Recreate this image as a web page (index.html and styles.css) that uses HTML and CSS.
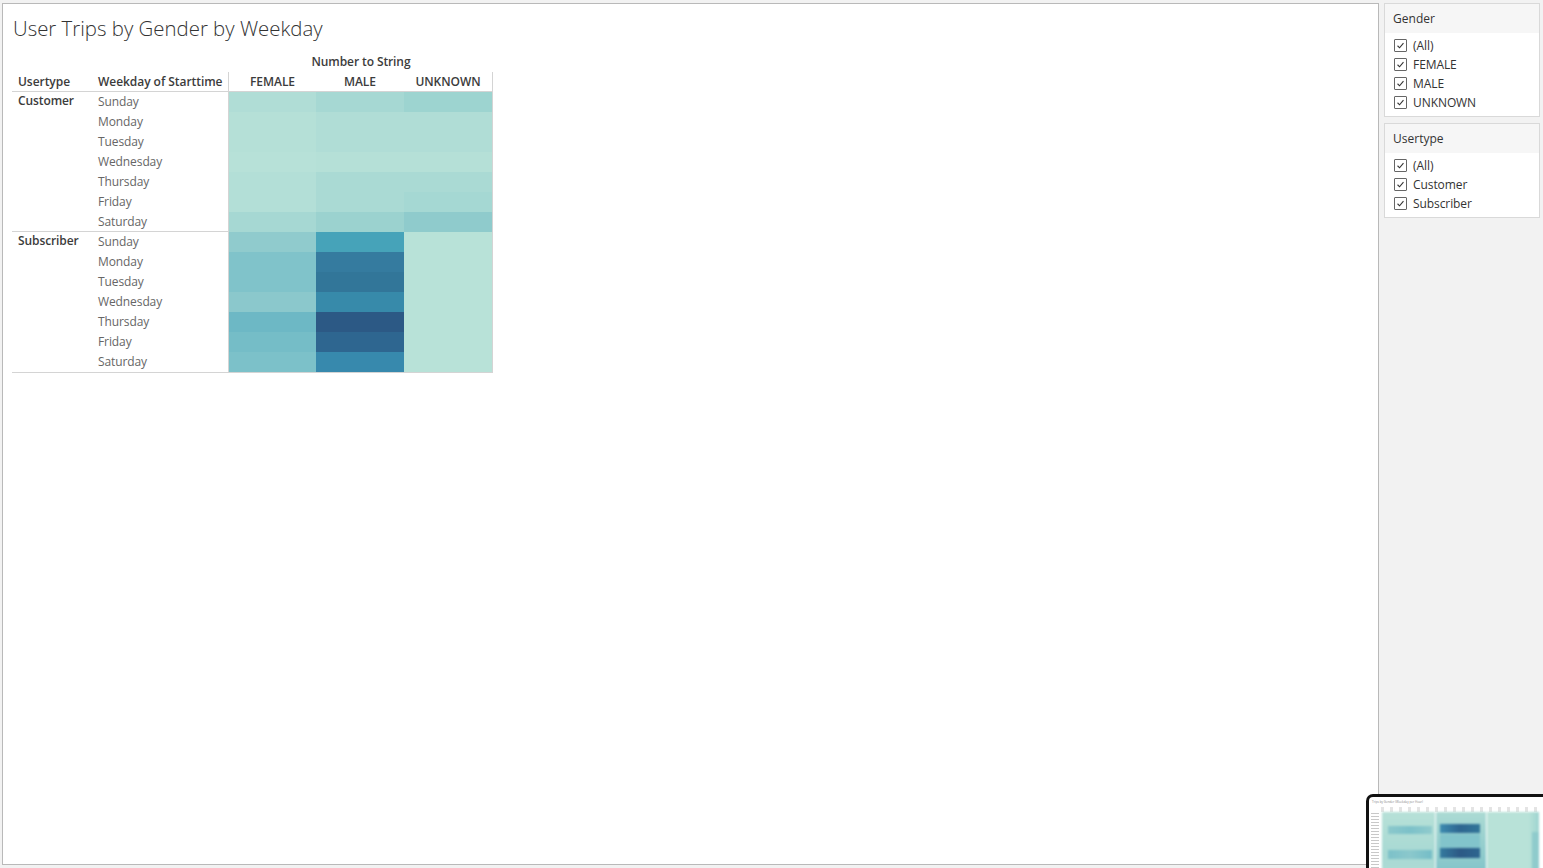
FILE: index.html
```html
<!DOCTYPE html>
<html lang="en">
<head>
<meta charset="utf-8">
<title>User Trips by Gender by Weekday</title>
<link rel="stylesheet" href="styles.css">
</head>
<body>
<div class="page">
  <main class="main">
    <h1 class="title">User Trips by Gender by Weekday</h1>
    <div class="crosstab">
      <div class="col-title">Number to String</div>
      <div class="head-row">
        <div class="h-user">Usertype</div>
        <div class="h-week">Weekday of Starttime</div>
        <div class="h-val h-first">FEMALE</div>
        <div class="h-val">MALE</div>
        <div class="h-val h-last">UNKNOWN</div>
      </div>
      <div class="body">
        <div class="group">
          <div class="labels">
            <div class="lab-user">Customer</div>
            <div class="lab-days">
              <div class="day">Sunday</div>
              <div class="day">Monday</div>
              <div class="day">Tuesday</div>
              <div class="day">Wednesday</div>
              <div class="day">Thursday</div>
              <div class="day">Friday</div>
              <div class="day">Saturday</div>
            </div>
          </div>
          <div class="cells">
            <div class="c" style="background:#b0ddd6"></div><div class="c" style="background:#a6d8d3"></div><div class="c" style="background:#9dd4d0"></div>
            <div class="c" style="background:#b5e0d7"></div><div class="c" style="background:#b0ddd6"></div><div class="c" style="background:#b0ddd6"></div>
            <div class="c" style="background:#b5e0d7"></div><div class="c" style="background:#b0ddd6"></div><div class="c" style="background:#b0ddd6"></div>
            <div class="c" style="background:#b7e1d8"></div><div class="c" style="background:#b5e0d7"></div><div class="c" style="background:#b5e0d7"></div>
            <div class="c" style="background:#b3dfd7"></div><div class="c" style="background:#aadad4"></div><div class="c" style="background:#aadad4"></div>
            <div class="c" style="background:#b3dfd7"></div><div class="c" style="background:#aadad4"></div><div class="c" style="background:#a5d8d3"></div>
            <div class="c" style="background:#a6d8d3"></div><div class="c" style="background:#9bd2cf"></div><div class="c" style="background:#8fcbcc"></div>
          </div>
        </div>
        <div class="group">
          <div class="labels labels-last">
            <div class="lab-user">Subscriber</div>
            <div class="lab-days">
              <div class="day">Sunday</div>
              <div class="day">Monday</div>
              <div class="day">Tuesday</div>
              <div class="day">Wednesday</div>
              <div class="day">Thursday</div>
              <div class="day">Friday</div>
              <div class="day">Saturday</div>
            </div>
          </div>
          <div class="cells">
            <div class="c" style="background:#90cbcd"></div><div class="c" style="background:#46a3b9"></div><div class="c" style="background:#b8e2d8"></div>
            <div class="c" style="background:#80c3ca"></div><div class="c" style="background:#357b9f"></div><div class="c" style="background:#b8e2d8"></div>
            <div class="c" style="background:#80c3ca"></div><div class="c" style="background:#327699"></div><div class="c" style="background:#b8e2d8"></div>
            <div class="c" style="background:#8bc8cc"></div><div class="c" style="background:#378aaa"></div><div class="c" style="background:#b8e2d8"></div>
            <div class="c" style="background:#6db8c5"></div><div class="c" style="background:#2c5985"></div><div class="c" style="background:#b8e2d8"></div>
            <div class="c" style="background:#75bdc7"></div><div class="c" style="background:#2e6690"></div><div class="c" style="background:#b8e2d8"></div>
            <div class="c" style="background:#7cc1c9"></div><div class="c" style="background:#3789ad"></div><div class="c" style="background:#b8e2d8"></div>
          </div>
        </div>
      </div>
    </div>
  </main>

  <aside class="side">
    <section class="card">
      <div class="card-head">Gender</div>
      <ul class="opts">
        <li><span class="cb"><svg viewBox="0 0 13 13"><path d="M3 6.8 L5.4 9.2 L10 3.6"/></svg></span>(All)</li>
        <li><span class="cb"><svg viewBox="0 0 13 13"><path d="M3 6.8 L5.4 9.2 L10 3.6"/></svg></span>FEMALE</li>
        <li><span class="cb"><svg viewBox="0 0 13 13"><path d="M3 6.8 L5.4 9.2 L10 3.6"/></svg></span>MALE</li>
        <li><span class="cb"><svg viewBox="0 0 13 13"><path d="M3 6.8 L5.4 9.2 L10 3.6"/></svg></span>UNKNOWN</li>
      </ul>
    </section>
    <section class="card">
      <div class="card-head">Usertype</div>
      <ul class="opts">
        <li><span class="cb"><svg viewBox="0 0 13 13"><path d="M3 6.8 L5.4 9.2 L10 3.6"/></svg></span>(All)</li>
        <li><span class="cb"><svg viewBox="0 0 13 13"><path d="M3 6.8 L5.4 9.2 L10 3.6"/></svg></span>Customer</li>
        <li><span class="cb"><svg viewBox="0 0 13 13"><path d="M3 6.8 L5.4 9.2 L10 3.6"/></svg></span>Subscriber</li>
      </ul>
    </section>
  </aside>
</div>

<div class="thumb">
  <div class="thumb-in">
    <div class="t-title">Trips by Gender (Weekday per Hour)</div>
    <div class="t-heads"></div>
    <div class="t-rows"></div>
    <div class="t-map">
      <div class="t-g t-g1"></div>
      <div class="t-g t-g2"></div>
      <div class="t-g t-g3"></div>
      <div class="t-band b1"></div>
      <div class="t-band b2"></div>
      <div class="t-band b3"></div>
      <div class="t-band b4"></div>
      <div class="t-band b5"></div>
      <div class="t-band b6"></div>
    </div>
  </div>
</div>
</body>
</html>
```

FILE: styles.css
```css
* { box-sizing: border-box; }
html, body { margin: 0; padding: 0; }
body {
  background: #f2f2f2;
  font-family: "Open Sans", "Noto Sans", "Liberation Sans", sans-serif;
  color: #333;
  width: 1543px;
  height: 868px;
  overflow: hidden;
}
.page {
  display: flex;
  align-items: flex-start;
  gap: 5px;
  padding: 3px 3px 0 2px;
}
.main {
  width: 1378px;
  height: 862px;
  background: #fff;
  border: 1px solid #b9b9b9;
  padding: 11px 0 0 10px;
}
.title {
  margin: 0;
  font-size: 20.4px;
  line-height: 27px;
  font-weight: 300;
  color: #333;
}
.crosstab {
  margin: 10px 0 0 -1px;
  width: 481px;
  font-size: 12px;
}
.col-title {
  height: 20px;
  line-height: 20px;
  padding-left: 217px;
  text-align: center;
  color: #3c3c3c;
  font-weight: 600;
  letter-spacing: -0.1px;
}
.head-row {
  display: flex;
  height: 20px;
  border-bottom: 1px solid #d4d4d4;
  font-weight: 600;
  color: #3c3c3c;
  line-height: 19px;
  letter-spacing: -0.05px;
}
.h-user { width: 80px; padding-left: 6px; }
.h-week { width: 137px; padding-left: 6px; border-right: 1px solid #d4d4d4; }
.h-val { width: 88px; text-align: center; }
.h-first { width: 87px; }
.h-last { width: 89px; border-right: 1px solid #d4d4d4; }
.body { border-bottom: 1px solid #d4d4d4; }
.group { display: flex; height: 140px; }
.labels {
  display: flex;
  width: 217px;
  height: 140px;
  border-bottom: 1px solid #d4d4d4;
}
.labels-last { border-bottom: 0; }
.lab-user {
  width: 80px;
  padding-left: 6px;
  line-height: 18px;
  font-weight: 600;
  color: #3c3c3c;
  letter-spacing: -0.1px;
}
.lab-days {
  width: 137px;
  border-right: 1px solid #d4d4d4;
  padding-left: 6px;
}
.day {
  height: 20px;
  line-height: 20px;
  color: #666;
  letter-spacing: -0.1px;
}
.cells {
  display: grid;
  grid-template-columns: 87px 88px 88px;
  grid-auto-rows: 20px;
  width: 264px;
  border-right: 1px solid #d4d4d4;
}
.c { height: 20px; }

.side {
  display: flex;
  flex-direction: column;
  gap: 6px;
  width: 156px;
}
.card {
  background: #fff;
  border: 1px solid #d9d9d9;
  padding-bottom: 4px;
}
.card-head {
  height: 29px;
  line-height: 29px;
  padding-left: 8px;
  background: #f6f6f6;
  font-size: 12px;
  color: #333;
}
.opts {
  list-style: none;
  margin: 0;
  padding: 3px 0 0 9px;
}
.opts li {
  display: flex;
  align-items: center;
  height: 19px;
  font-size: 12px;
  color: #333;
  letter-spacing: -0.1px;
}
.cb {
  width: 13px;
  height: 13px;
  border: 1px solid #666;
  border-radius: 1px;
  margin-right: 6px;
  display: flex;
}
.cb svg { width: 11px; height: 11px; }
.cb path { fill: none; stroke: #333; stroke-width: 1.3; }

.thumb {
  position: absolute;
  left: 1366px;
  top: 794px;
  width: 180px;
  height: 80px;
  background: #111;
  border-radius: 7px 0 0 0;
  padding: 3px 0 0 3px;
}
.thumb-in {
  position: relative;
  width: 100%;
  height: 100%;
  background: #fff;
  border-radius: 4px 0 0 0;
  overflow: hidden;
}
.t-title {
  position: absolute;
  left: 3px;
  top: 3px;
  font-size: 3px;
  color: #888;
  white-space: nowrap;
}
.t-heads {
  position: absolute;
  left: 12px;
  top: 10px;
  width: 158px;
  height: 5px;
  background: repeating-linear-gradient(90deg, #ddd 0 3px, transparent 3px 9px);
  opacity: .8;
}
.t-rows {
  position: absolute;
  left: 2px;
  top: 16px;
  width: 8px;
  height: 60px;
  background: repeating-linear-gradient(180deg, #bbb 0 1px, transparent 1px 3px);
  opacity: .8;
}
.t-map {
  position: absolute;
  left: 13px;
  top: 15px;
  width: 157px;
  height: 70px;
  filter: blur(1px);
}
.t-g { position: absolute; top: 0; height: 70px; }
.t-g1 { left: 0; width: 53px; background: linear-gradient(180deg, #b7e1d8, #a8d9d3 60%, #b0ddd6); }
.t-g2 { left: 54px; width: 50px; background: linear-gradient(180deg, #acdbd4, #8fcbcc 60%, #7cc1c9); }
.t-g3 { left: 105px; width: 52px; background: linear-gradient(90deg, #b8e2d8 80%, #9dd4d0); }
.t-band { position: absolute; }
.b1 { left: 6px; top: 14px; width: 44px; height: 8px; background: linear-gradient(90deg, #8bc8cc, #7cc1c9, #90cbcd); }
.b2 { left: 58px; top: 12px; width: 40px; height: 9px; background: linear-gradient(90deg, #3d8cb0, #2e6690, #327699); }
.b3 { left: 6px; top: 38px; width: 44px; height: 9px; background: linear-gradient(90deg, #7cc1c9, #8bc8cc, #75bdc7); }
.b4 { left: 58px; top: 36px; width: 40px; height: 10px; background: linear-gradient(90deg, #357b9f, #2c5985, #2e6690); }
.b5 { left: 58px; top: 22px; width: 40px; height: 14px; background: #82c4cb; }
.b6 { left: 150px; top: 20px; width: 7px; height: 40px; background: #8fcbcc; }
```
